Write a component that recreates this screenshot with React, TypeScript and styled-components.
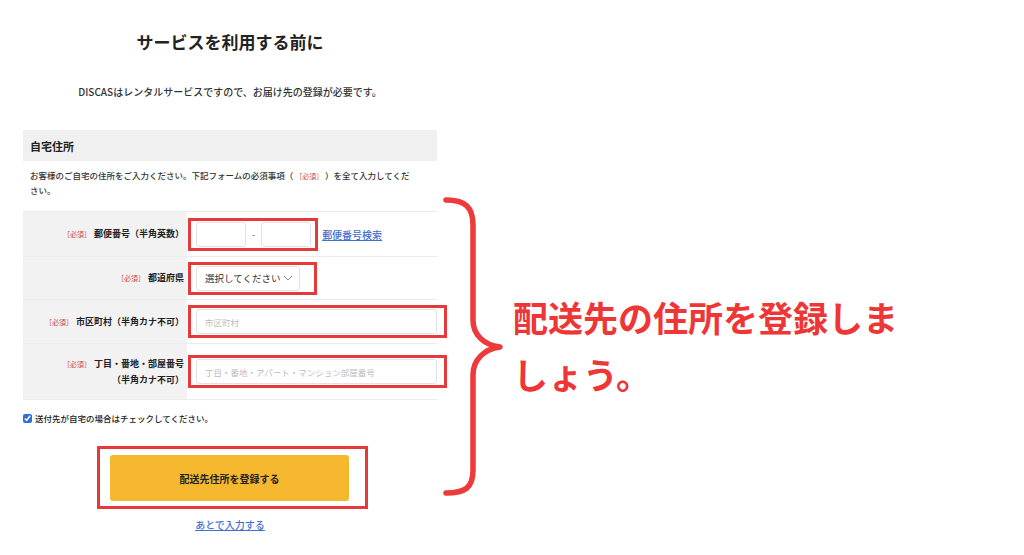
import { FC } from "react";
import styled, { createGlobalStyle } from "styled-components";

const GlobalStyle = createGlobalStyle`
  html, body {
    margin: 0;
    padding: 0;
    background: #fff;
  }
  body {
    font-family: "Noto Sans CJK JP", "Noto Sans", sans-serif;
    color: #222;
  }
`;

const Page = styled.div`
  width: 1024px;
  height: 555px;
  display: flex;
  align-items: flex-start;
  overflow: hidden;
`;

const FormColumn = styled.div`
  width: 414px;
  margin-left: 23px;
  display: flex;
  flex-direction: column;
`;

const Title = styled.h1`
  margin: 30px 0 0;
  font-size: 17px;
  line-height: 24px;
  font-weight: 700;
  text-align: center;
  color: #222;
`;

const Lead = styled.p`
  margin: 30px 0 0;
  font-size: 10px;
  line-height: 16px;
  font-weight: 500;
  text-align: center;
  color: #333;
`;

const SectionHead = styled.div`
  margin-top: 30px;
  height: 31px;
  display: flex;
  align-items: center;
  padding-left: 7px;
  background: #f0f0f0;
  font-size: 11px;
  font-weight: 700;
  color: #222;
`;

const Note = styled.p`
  margin: 7px 0 0;
  padding: 0 20px 0 7px;
  font-size: 8.5px;
  line-height: 14px;
  font-weight: 500;
  color: #333;
`;

const Req = styled.span<{ $inline?: boolean }>`
  color: #c9453d;
  font-size: 7px;
  font-weight: 400;
  margin: ${(p) => (p.$inline ? "0" : "0 3px 0 0")};
`;

const Table = styled.div`
  margin-top: 14px;
  display: flex;
  flex-direction: column;
  border-bottom: 1px solid #ececec;
`;

const Row = styled.div<{ $h: number }>`
  display: grid;
  grid-template-columns: 164px 1fr;
  box-sizing: border-box;
  height: ${(p) => p.$h}px;
  border-top: 1px solid #ececec;
`;

const LabelCell = styled.div`
  background: #f2f2f2;
  display: flex;
  align-items: center;
  justify-content: flex-end;
  padding-right: 3px;
  text-align: right;
  font-size: 9px;
  line-height: 16px;
  font-weight: 700;
  color: #222;
`;

const FieldCell = styled.div`
  display: flex;
  align-items: center;
  padding-left: 1px;
  gap: 4px;
`;

const Highlight = styled.div<{ $wide?: boolean }>`
  display: flex;
  align-items: center;
  gap: 6px;
  border: 3px solid #e63a3a;
  padding: 1px 4px 1px 5px;
  ${(p) => (p.$wide ? "flex: 1; margin-right: -10px; padding-right: 7px;" : "")}
`;

const Box = styled.div<{ $w?: number }>`
  ${(p) => (p.$w ? `width: ${p.$w}px;` : "flex: 1;")}
  height: 25px;
  box-sizing: border-box;
  border: 1px solid #e2e2e2;
  border-radius: 3px;
  background: #fff;
  display: flex;
  align-items: center;
  padding: 0 8px;
  font-size: 8.5px;
  color: #bdbdbd;
`;

const Dash = styled.span`
  font-size: 9px;
  color: #555;
`;

const SelectBox = styled.div`
  width: 104px;
  height: 25px;
  box-sizing: border-box;
  border: 1px solid #e2e2e2;
  border-radius: 3px;
  display: flex;
  align-items: center;
  justify-content: space-between;
  padding: 0 6px 0 8px;
  font-size: 9.5px;
  color: #333;
`;

const Spacer = styled.span`
  width: 4px;
`;

const TextLink = styled.a<{ $size?: number }>`
  color: #3f6fd0;
  text-decoration: underline;
  font-size: ${(p) => p.$size ?? 10}px;
  font-weight: 500;
  cursor: pointer;
`;

const CheckRow = styled.label`
  margin-top: 12px;
  display: flex;
  align-items: center;
  gap: 3px;
  font-size: 8.5px;
  font-weight: 500;
  color: #222;

  input {
    margin: 0;
    width: 9px;
    height: 9px;
    accent-color: #2f6fd6;
  }
`;

const ButtonFrame = styled.div`
  align-self: center;
  margin: 22px 0 0 5px;
  border: 3px solid #e63a3a;
  padding: 6px 16px 5px 10px;
`;

const SubmitButton = styled.button`
  display: block;
  width: 239px;
  height: 46px;
  border: none;
  border-radius: 3px;
  background: #f6b82f;
  font-family: inherit;
  font-size: 10px;
  font-weight: 700;
  color: #222;
`;

const LaterLink = styled.div`
  margin-top: 5px;
  text-align: center;
  line-height: 16px;
`;

const Annotation = styled.div`
  display: flex;
  align-items: flex-start;
  margin: 195px 0 0 3px;
`;

const Message = styled.p`
  margin: 93px 0 0 8px;
  width: 400px;
  font-size: 35px;
  line-height: 57px;
  font-weight: 700;
  color: #ee3636;
`;

const Brace: FC = () => (
  <svg width="65" height="305" viewBox="0 0 65 305">
    <path
      d="M6 5 C25 5, 33 12, 33 30 L33 125 C33 140, 44 150, 60 152 C44 154, 33 165, 33 180 L33 275 C33 293, 25 298, 6 298"
      fill="none"
      stroke="#ee3a3a"
      strokeWidth="5.5"
      strokeLinecap="round"
      strokeLinejoin="round"
    />
  </svg>
);

const Chevron: FC = () => (
  <svg width="10" height="6" viewBox="0 0 10 6">
    <path d="M1 1 L5 5 L9 1" fill="none" stroke="#888" strokeWidth="1" />
  </svg>
);

const App: FC = () => {
  return (
    <>
      <GlobalStyle />
      <Page>
        <FormColumn>
          <Title>サービスを利用する前に</Title>
          <Lead>DISCASはレンタルサービスですので、お届け先の登録が必要です。</Lead>
          <SectionHead>自宅住所</SectionHead>
          <Note>
            お客様のご自宅の住所をご入力ください。下記フォームの必須事項（{" "}
            <Req $inline>［必須］</Req> ）を全て入力してください。
          </Note>
          <Table>
            <Row $h={45}>
              <LabelCell>
                <span>
                  <Req>［必須］</Req>郵便番号（半角英数）
                </span>
              </LabelCell>
              <FieldCell>
                <Highlight>
                  <Box $w={50} />
                  <Dash>-</Dash>
                  <Box $w={50} />
                </Highlight>
                <TextLink $size={10}>郵便番号検索</TextLink>
              </FieldCell>
            </Row>
            <Row $h={43}>
              <LabelCell>
                <span>
                  <Req>［必須］</Req>都道府県
                </span>
              </LabelCell>
              <FieldCell>
                <Highlight>
                  <SelectBox>
                    選択してください
                    <Chevron />
                  </SelectBox>
                  <Spacer />
                </Highlight>
              </FieldCell>
            </Row>
            <Row $h={44}>
              <LabelCell>
                <span>
                  <Req>［必須］</Req>市区町村（半角カナ不可）
                </span>
              </LabelCell>
              <FieldCell>
                <Highlight $wide>
                  <Box>市区町村</Box>
                </Highlight>
              </FieldCell>
            </Row>
            <Row $h={56}>
              <LabelCell>
                <span>
                  <Req>［必須］</Req>丁目・番地・部屋番号
                  <br />
                  （半角カナ不可）
                </span>
              </LabelCell>
              <FieldCell>
                <Highlight $wide>
                  <Box>丁目・番地・アパート・マンション部屋番号</Box>
                </Highlight>
              </FieldCell>
            </Row>
          </Table>
          <CheckRow>
            <input type="checkbox" defaultChecked />
            送付先が自宅の場合はチェックしてください。
          </CheckRow>
          <ButtonFrame>
            <SubmitButton>配送先住所を登録する</SubmitButton>
          </ButtonFrame>
          <LaterLink>
            <TextLink $size={10}>あとで入力する</TextLink>
          </LaterLink>
        </FormColumn>
        <Annotation>
          <Brace />
          <Message>配送先の住所を登録しましょう。</Message>
        </Annotation>
      </Page>
    </>
  );
};

export default App;
